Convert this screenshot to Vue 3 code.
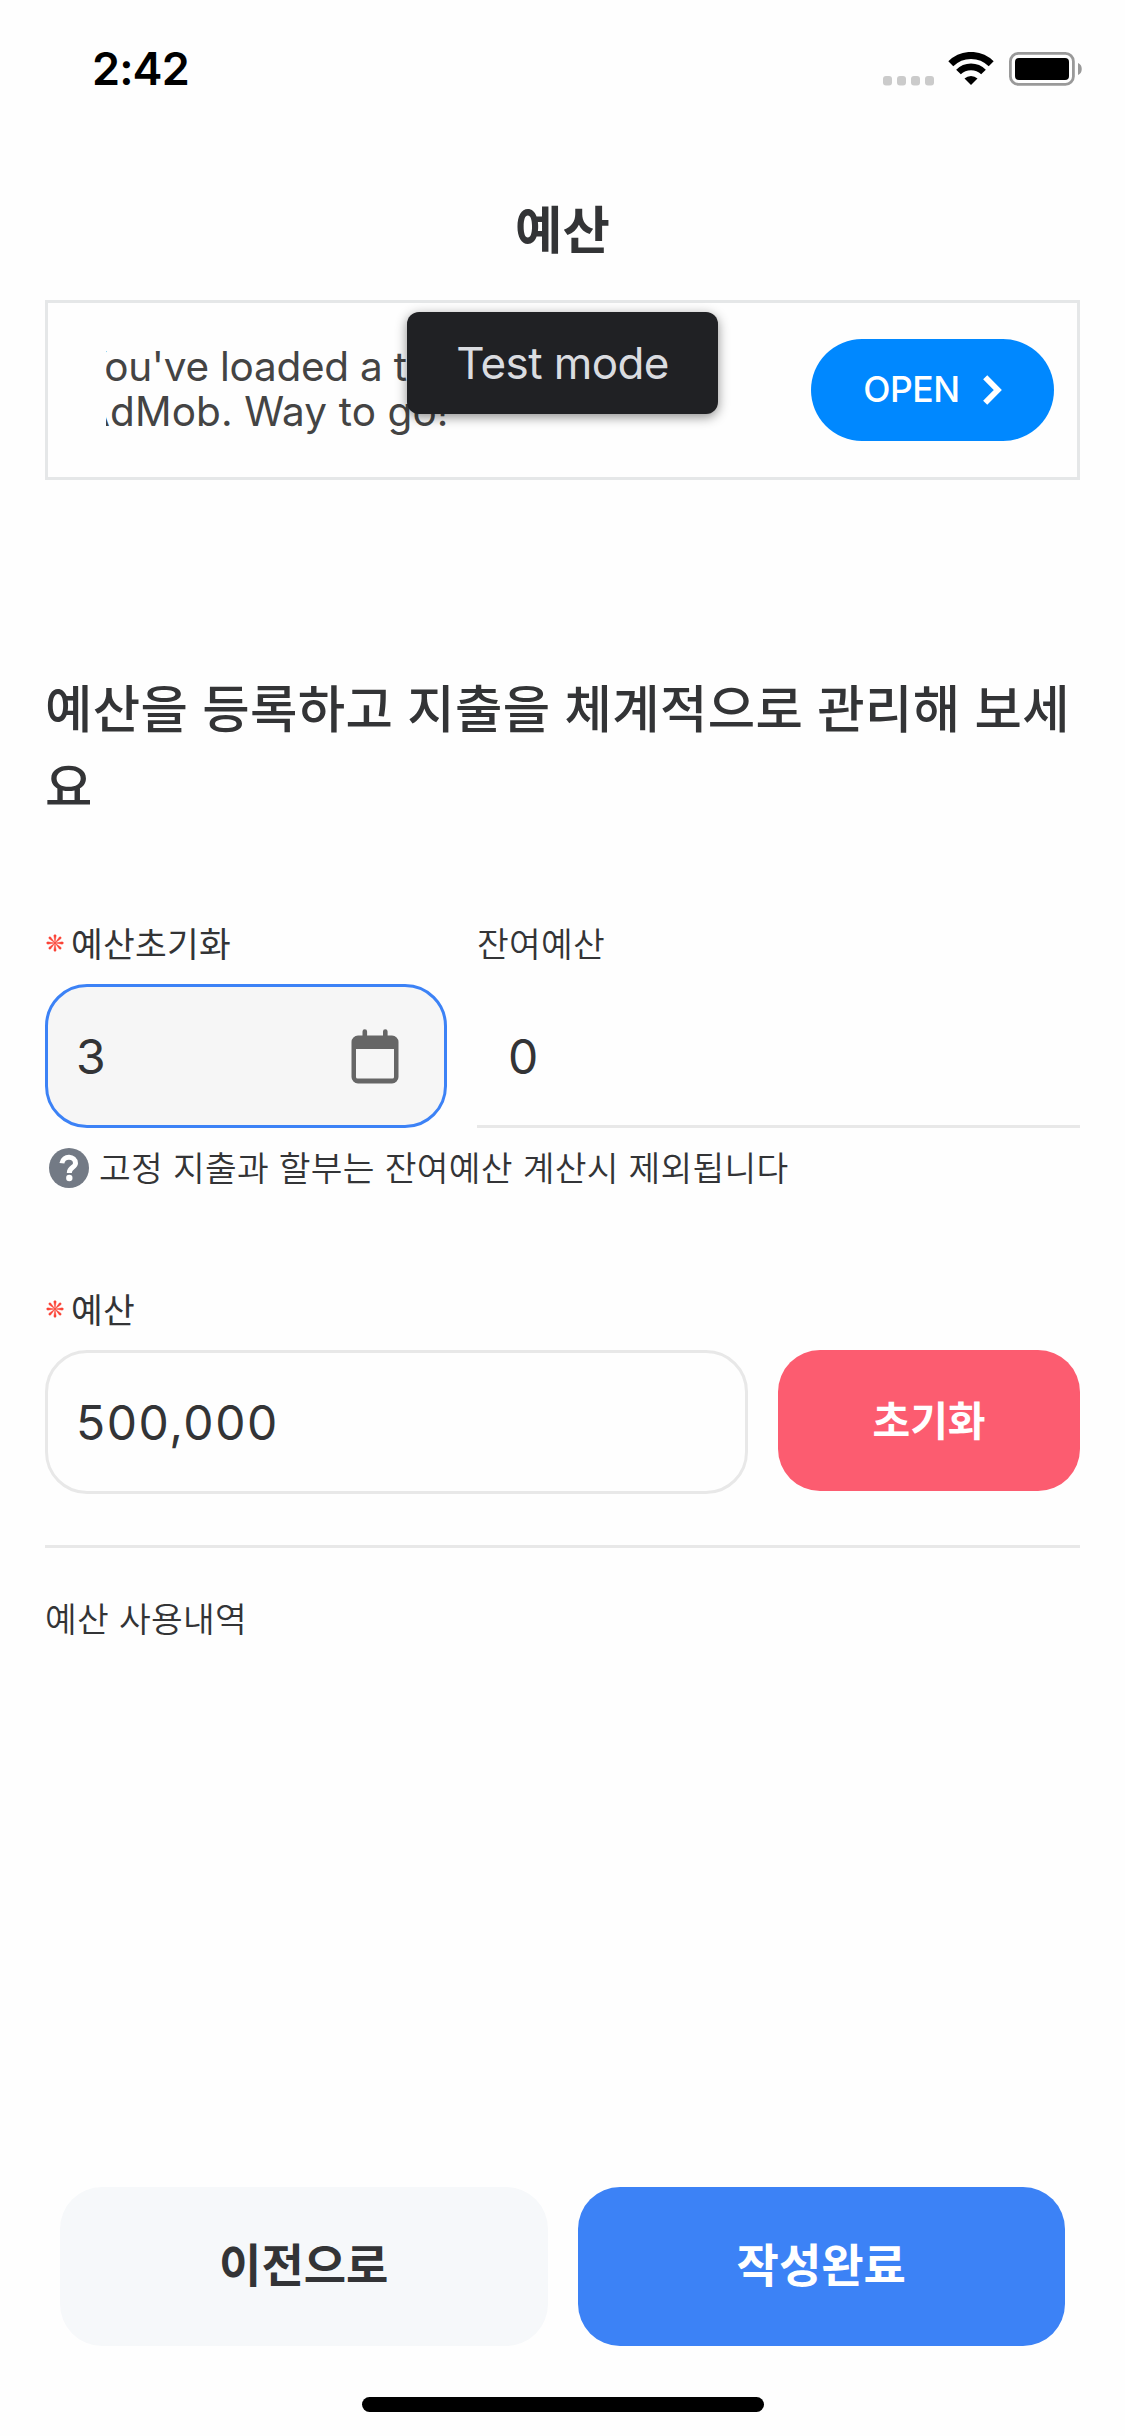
<script setup>
const adLines = ["You've loaded a test ad from", 'AdMob. Way to go!']
const spokes = [0, 45, 90, 135, 180, 225, 270, 315]
</script>

<template>
  <main class="screen">
    <header class="status">
      <span class="time">2:42</span>
      <div class="indicators">
        <svg class="dots" width="51" height="10" viewBox="0 0 51 10" fill="#cbcbcb">
          <rect v-for="i in 4" :key="i" :x="(i - 1) * 14" y="0" width="9" height="9.5" rx="3" />
        </svg>
        <svg class="wifi" width="46" height="34" viewBox="0 0 46 34" fill="none" stroke="#000">
          <path d="M2.8 11.8a28.5 28.5 0 0 1 40.4 0" stroke-width="7" />
          <path d="M10.5 20a17.7 17.7 0 0 1 25 0" stroke-width="6.6" />
          <path d="M16.5 26.6a9.2 9.2 0 0 1 13 0L23 33z" fill="#000" stroke="none" />
        </svg>
        <svg class="battery" width="73" height="34" viewBox="0 0 73 34">
          <rect x="1.4" y="1.4" width="63" height="31" rx="8" fill="none" stroke="#999" stroke-width="2.8" />
          <rect x="6" y="6" width="54" height="22" rx="4" />
          <path d="M69 11c5 1.5 5 10.5 0 12z" fill="#999" />
        </svg>
      </div>
    </header>

    <h1 class="title">예산</h1>

    <section class="ad">
      <div class="ad-copy">
        <p v-for="line in adLines" :key="line">{{ line }}</p>
      </div>
      <button class="open">
        <span>OPEN</span>
        <svg width="19" height="30" viewBox="0 0 19 30" fill="none" stroke="#fff" stroke-width="5.8">
          <path d="M2.2 2.2 14.8 15 2.2 27.8" />
        </svg>
      </button>
      <div class="test-mode">Test mode</div>
    </section>

    <h2 class="headline">예산을 등록하고 지출을 체계적으로 관리해 보세요</h2>

    <section class="row top-row">
      <div class="field reset-day">
        <label class="label required">
          <svg class="star" width="18" height="18" viewBox="-9 -9 18 18" fill="#fb4235">
            <path v-for="a in spokes" :key="a" :transform="`rotate(${a})`" d="M0 0 1.2-7.4Q0-9.6-1.2-7.4Z" stroke="#fb4235" stroke-width=".4" />
          </svg>
          <span>예산초기화</span>
        </label>
        <div class="input active">
          <span>3</span>
          <svg class="calendar" width="48" height="55" viewBox="0 0 48 55" fill="#666">
            <path fill-rule="evenodd" d="M7 6.500h4.500V2.500a2.300 2.300 0 0 1 4.600 0v4H32V2.500a2.300 2.300 0 0 1 4.600 0v4H41a6.500 6.500 0 0 1 6.500 6.500v35a6.500 6.500 0 0 1-6.500 6.500H7A6.500 6.500 0 0 1 .5 48V13A6.500 6.500 0 0 1 7 6.500zM5 20v28a1.500 1.500 0 0 0 1.500 1.500h35A1.500 1.500 0 0 0 43 48V20z" />
          </svg>
        </div>
      </div>
      <div class="field remaining">
        <label class="label light">잔여예산</label>
        <div class="plain">0</div>
      </div>
    </section>

    <p class="hint">
      <svg width="40" height="40" viewBox="0 0 40 40">
        <circle cx="20" cy="20" r="20" fill="#737a85" />
        <path d="M12.900 15.300C14 6.800 26.600 7.800 26.500 15.300C26.400 19.600 20.300 19.300 20.300 25" fill="none" stroke="#fff" stroke-width="5" />
        <circle cx="20.300" cy="30" r="3.200" fill="#fff" />
      </svg>
      <span>고정 지출과 할부는 잔여예산 계산시 제외됩니다</span>
    </p>

    <section class="field budget">
      <label class="label required">
        <svg class="star" width="18" height="18" viewBox="-9 -9 18 18" fill="#fb4235">
          <path v-for="a in spokes" :key="a" :transform="`rotate(${a})`" d="M0 0 1.2-7.4Q0-9.6-1.2-7.4Z" stroke="#fb4235" stroke-width=".4" />
        </svg>
        <span>예산</span>
      </label>
      <div class="row">
        <div class="input amount">500,000</div>
        <button class="reset">초기화</button>
      </div>
    </section>

    <h3 class="history">예산 사용내역</h3>

    <footer class="actions">
      <button class="prev">이전으로</button>
      <button class="done">작성완료</button>
    </footer>
    <div class="home"></div>
  </main>
</template>

<style>
body {
  background: #fff;
}
</style>

<style scoped>
.screen,
.screen * {
  box-sizing: border-box;
}
.screen {
  width: 1125px;
  height: 2436px;
  display: flex;
  flex-direction: column;
  background: #fefefe;
  color: #333436;
  font-family: Inter, "Noto Sans CJK KR", sans-serif;
  overflow: hidden;
}
h1, h2, h3, p {
  margin: 0;
  font-weight: 400;
}
button {
  border: 0;
  padding: 0;
  font-family: inherit;
  display: flex;
  align-items: center;
  justify-content: center;
}
svg {
  display: block;
  flex: none;
}
.status {
  height: 138px;
  padding: 0 43px 0 92px;
  display: flex;
  align-items: center;
  justify-content: space-between;
}
.time {
  color: #000;
  font-size: 45px;
  font-weight: 600;
  line-height: 60px;
  letter-spacing: -0.900px;
}
.indicators {
  display: flex;
  align-items: flex-end;
}
.wifi {
  margin: 0 15px 0 14px;
}
.title {
  height: 162px;
  padding-top: 47px;
  text-align: center;
  font-size: 51.500px;
  font-weight: 700;
  line-height: 90px;
}
.ad {
  position: relative;
  height: 180px;
  margin: 0 45px;
  padding: 0 23px 0 58px;
  border: 3px solid #e5e7e8;
  display: flex;
  align-items: flex-start;
  justify-content: space-between;
}
.ad-copy {
  width: 560px;
  margin-top: 41px;
  padding-bottom: 12px;
  overflow: hidden;
  color: #444;
  font-size: 40.500px;
  line-height: 45px;
}
.ad-copy p {
  margin-left: -26px;
  white-space: nowrap;
  letter-spacing: -0.250px;
}
.ad-copy p + p {
  margin-left: -24px;
  letter-spacing: 0.100px;
}
.open {
  width: 243px;
  height: 102px;
  margin-top: 36px;
  gap: 23px;
  border-radius: 51px;
  background: #08f;
  color: #fff;
  font-size: 35.500px;
  font-weight: 500;
  letter-spacing: -0.400px;
}
.open span,
.open svg {
  margin-top: -1px;
}
.test-mode {
  position: absolute;
  left: 359px;
  top: 9px;
  width: 311px;
  height: 102px;
  border-radius: 12px;
  background: #202124;
  box-shadow: 0 3px 12px rgba(0, 0, 0, 0.45);
  color: #dadce0;
  font-size: 44px;
  line-height: 102px;
  text-align: center;
  letter-spacing: -0.600px;
}
.headline {
  margin: 190px 45px 0;
  height: 156px;
  font-size: 51.500px;
  font-weight: 500;
  line-height: 78px;
  letter-spacing: 0.350px;
  word-break: break-all;
}
.row {
  display: flex;
  gap: 30px;
}
.top-row {
  margin: 93px 45px 0;
}
.reset-day {
  width: 402px;
}
.remaining {
  flex: 1;
}
.label {
  height: 65px;
  padding-top: 1px;
  display: flex;
  align-items: flex-start;
  font-size: 34.500px;
  line-height: 50px;
  letter-spacing: 0.250px;
}
.star {
  margin: 14px 7px 0 1px;
}
.light,
.hint,
.history {
  font-family: Inter, "Noto Sans CJK KR DemiLight", "Noto Sans CJK KR", sans-serif;
  font-weight: 350;
  letter-spacing: 0.250px;
}
.input {
  height: 144px;
  padding: 0 45px 0 28px;
  border: 3px solid #e8e8e8;
  border-radius: 42px;
  display: flex;
  align-items: center;
  justify-content: space-between;
}
.input,
.plain {
  font-size: 48px;
  letter-spacing: 1.550px;
}
.active {
  border-color: #3c82f6;
  background: #f6f6f6;
}
.plain {
  height: 144px;
  padding: 4px 31px 0;
  border-bottom: 3px solid #e8e8e8;
  line-height: 138px;
}
.hint {
  height: 50px;
  margin: 16px 45px 0 49px;
  display: flex;
  align-items: center;
  gap: 10px;
  font-size: 34.500px;
  line-height: 50px;
  white-space: nowrap;
}
.hint svg {
  margin-top: -3px;
}
.budget {
  margin: 91px 45px 0;
}
.amount {
  width: 703px;
}
.reset {
  flex: 1;
  height: 141px;
  padding-bottom: 5px;
  border-radius: 42px;
  background: #fc5c70;
  color: #fff;
  font-size: 41px;
  font-weight: 700;
}
.history {
  margin: 51px 45px 0;
  padding-top: 47px;
  border-top: 3px solid #e8e8e8;
  font-size: 34.500px;
  line-height: 50px;
}
.actions {
  display: flex;
  gap: 30px;
  margin: auto 60px 0;
}
.actions button {
  flex: 1;
  height: 159px;
  padding-bottom: 9px;
  border-radius: 42px;
  font-size: 46px;
  font-weight: 700;
}
.prev {
  background: #f6f8fa;
  color: #333436;
}
.done {
  background: #3c82f6;
  color: #fff;
}
.home {
  width: 402px;
  height: 15px;
  margin: 51px auto 24px;
  border-radius: 7.500px;
  background: #000;
}
</style>
